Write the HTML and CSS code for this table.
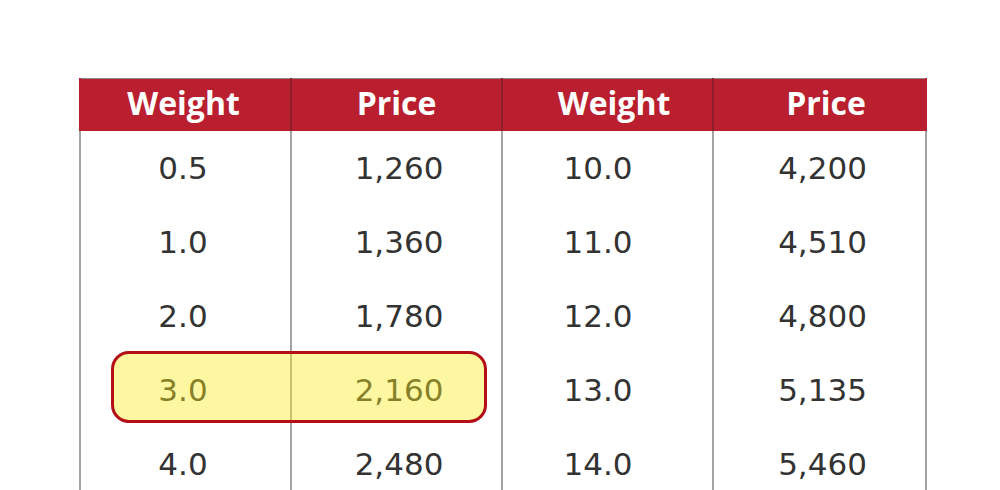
FILE: index.html
```html
<!DOCTYPE html>
<html>
<head>
<meta charset="utf-8">
<link rel="stylesheet" href="styles.css">
</head>
<body>
<div class="wrap">
  <table class="rates">
    <colgroup>
      <col class="c1"><col class="c2"><col class="c3"><col class="c4">
    </colgroup>
    <thead>
      <tr><th>Weight</th><th>Price</th><th>Weight</th><th>Price</th></tr>
    </thead>
    <tbody>
      <tr><td>0.5</td><td>1,260</td><td>10.0</td><td>4,200</td></tr>
      <tr><td>1.0</td><td>1,360</td><td>11.0</td><td>4,510</td></tr>
      <tr><td>2.0</td><td>1,780</td><td>12.0</td><td>4,800</td></tr>
      <tr><td>3.0</td><td>2,160</td><td>13.0</td><td>5,135</td></tr>
      <tr><td>4.0</td><td>2,480</td><td>14.0</td><td>5,460</td></tr>
    </tbody>
  </table>
  <div class="highlight"></div>
</div>
</body>
</html>
```
FILE: styles.css
```css
html, body {
  margin: 0;
  padding: 0;
  background: #ffffff;
  height: 490px;
  overflow: hidden;
}
.wrap {
  position: relative;
  margin: 78px 0 0 79px;
  width: 846px;
}
.rates {
  border-collapse: collapse;
  table-layout: fixed;
  width: 846px;
}
.c1 { width: 211px; }
.c2 { width: 211px; }
.c3 { width: 211px; }
.c4 { width: 213px; }
.rates th {
  background: #b91f2e;
  color: #ffffff;
  font-family: "Open Sans", "Noto Sans", sans-serif;
  font-weight: 700;
  font-size: 32px;
  line-height: 40px;
  height: 52px;
  padding: 0 0 4px 0;
  text-align: center;
  border-top: 1px solid #8a8a8a;
  border-left: 2px solid #8c1f2a;
  box-sizing: border-box;
}
.rates th:first-child { border-left: 2px solid #b91f2e; padding-right: 4px; }
.rates th:last-child { border-right: 2px solid #b91f2e; padding-left: 13px; }
.rates th:nth-child(3) { padding-left: 13px; }
.rates td {
  font-family: "DejaVu Sans", sans-serif;
  font-size: 31px;
  color: #333333;
  height: 74px;
  padding: 0;
  text-align: center;
  border-left: 2px solid #a3a3a3;
  box-sizing: border-box;
}
.rates td:first-child { border-left: 2px solid #a3a3a3; padding-right: 5px; }
.rates td:nth-child(2) { padding-left: 5px; }
.rates td:nth-child(3) { padding-right: 19px; }
.rates td:last-child { border-right: 2px solid #a3a3a3; padding-left: 6px; }
.highlight {
  position: absolute;
  left: 32px;
  top: 273px;
  width: 376px;
  height: 72px;
  box-sizing: border-box;
  border: 3px solid #b40e16;
  border-radius: 18px;
  background: rgba(252, 236, 30, 0.42);
}
```
